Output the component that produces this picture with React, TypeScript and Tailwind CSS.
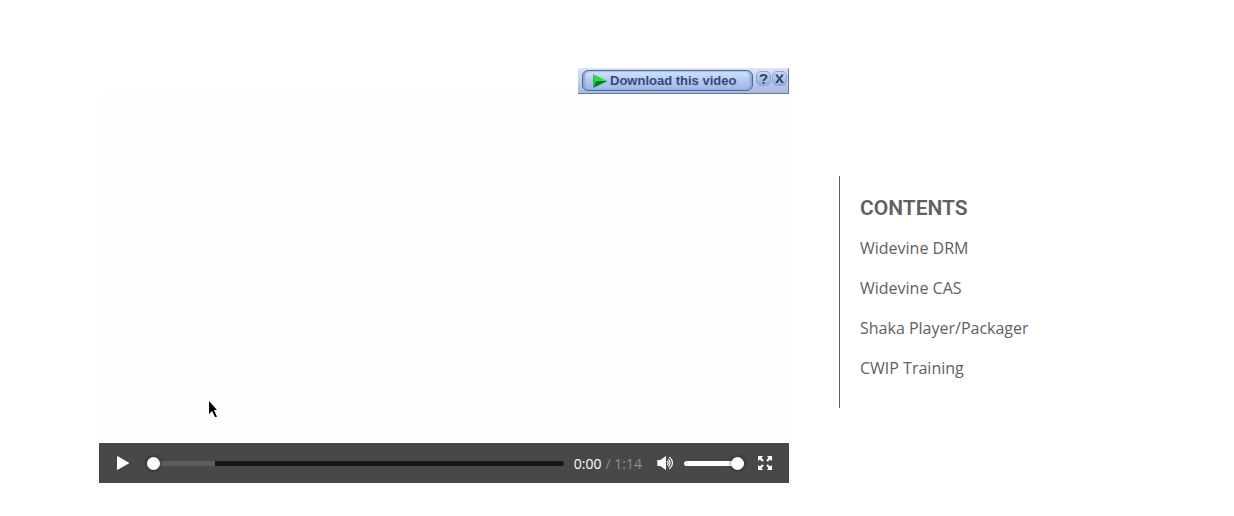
const links = ["Widevine DRM", "Widevine CAS", "Shaka Player/Packager", "CWIP Training"];

const thumb =
  "[&::-webkit-slider-thumb]:-mt-1 [&::-webkit-slider-thumb]:h-[13px] [&::-webkit-slider-thumb]:w-[13px] [&::-webkit-slider-thumb]:appearance-none [&::-webkit-slider-thumb]:rounded-full [&::-webkit-slider-thumb]:bg-white [&::-webkit-slider-thumb]:shadow-[0_0_3px_1px_rgba(0,0,0,0.4)]";

const roundButton =
  "flex h-[15px] w-[15px] items-center justify-center rounded-[5px] border border-[#8da4cf] bg-gradient-to-b from-[#c9daf5] to-[#8faede] text-[#33456b]";

function DownloadBar() {
  return (
    <div className="flex h-[26px] w-[211px] self-end border-r border-b border-[#6175a8] border-t border-t-[#dce6f8] bg-gradient-to-b from-[#d7e3f8] to-[#a9b8dc] pt-px pl-1">
      <button
        type="button"
        className="flex h-[21px] w-[171px] items-center rounded-md border border-[#50699f] bg-[linear-gradient(to_bottom,#d5e3fa,#b3caf0_50%,#9ab8e9)] pl-2 font-['Liberation_Sans',sans-serif] text-[13px] leading-4 font-bold whitespace-nowrap text-[#34497a] shadow-[inset_2px_0_2px_#8fa5d2,inset_-2px_0_2px_#8fa5d2]"
      >
        <svg width="18" height="16" viewBox="0 0 18 16" aria-hidden="true" className="shrink-0">
          <path d="M2 1 16.500 8H5Z" fill="#2fe03a" />
          <path d="M2 15 16.500 8H5Z" fill="#0b7a28" />
          <path d="M2 1 5 8 2 15Z" fill="#22c53c" />
        </svg>
        <span className="ml-px">Download this video</span>
      </button>
      <div className="ml-[3px] flex gap-px pt-px">
        <button type="button" aria-label="Help" className={roundButton}>
          <svg width="11" height="12" viewBox="0 0 11 12" fill="none" stroke="currentColor" strokeWidth="2">
            <path d="M2.500 4C2.500 1.200 8.500 1.200 8.500 4c0 1.800-3 1.800-3 4M5.500 9v2" />
          </svg>
        </button>
        <button type="button" aria-label="Close" className={roundButton}>
          <svg width="11" height="11" viewBox="0 0 11 11" fill="none" stroke="currentColor" strokeWidth="2">
            <path d="m2.500 2 6 7.500m0-7.500-6 7.500" />
            <path d="M1.500 2h2.500M7 2h2.500M1.500 9.500h2.500M7 9.500h2.500" strokeWidth="1" />
          </svg>
        </button>
      </div>
    </div>
  );
}

function Controls() {
  return (
    <div className="flex h-10 items-center bg-[#484848] pr-[17px] pl-[17px] text-white">
      <button type="button" aria-label="Play" className="flex">
        <svg width="14" height="14" viewBox="0 0 14 14" fill="#fff">
          <path d="M1 .7Q1 0 1.800.3L12.600 6.400q.8.6 0 1.200L1.800 13.700Q1 14 1 13.300Z" />
        </svg>
      </button>
      <input
        type="range"
        aria-label="Seek"
        min="0"
        max="74"
        defaultValue="0"
        className={`ml-[17px] h-[13px] min-w-0 flex-1 appearance-none bg-transparent [&::-webkit-slider-runnable-track]:h-[5px] [&::-webkit-slider-runnable-track]:rounded-full [&::-webkit-slider-runnable-track]:bg-[linear-gradient(to_right,#5c5c5c_68px,#171717_68px)] ${thumb}`}
      />
      <div className="ml-2.5 flex gap-1 pt-0.5 font-['Open_Sans',sans-serif] text-sm leading-5">
        <span>0:00</span>
        <span className="text-[#8e8e8e]">/ 1:14</span>
      </div>
      <button type="button" aria-label="Mute" className="ml-[15px] flex">
        <svg width="17" height="14" viewBox="0 0 17 14" fill="none" stroke="#fff" strokeWidth="1.2">
          <path d="M.3 4h3L9 0v14l-5.700-4h-3Z" fill="#fff" stroke="none" />
          <path d="M10.300 5q1.700 2 0 4M11.300 2.900q3.500 4.100 0 8.200M12.400.9q6.200 6.100 0 12.200" />
        </svg>
      </button>
      <input
        type="range"
        aria-label="Volume"
        defaultValue="100"
        className={`ml-2.5 h-[13px] w-[60px] appearance-none bg-transparent [&::-webkit-slider-runnable-track]:h-[5px] [&::-webkit-slider-runnable-track]:rounded-full [&::-webkit-slider-runnable-track]:bg-white ${thumb}`}
      />
      <button type="button" aria-label="Fullscreen" className="ml-3.5 flex">
        <svg width="14" height="14" viewBox="0 0 14 14" fill="#fff">
          <path d="M0 0h5L3.500 1.700 5.700 4.300 4.300 5.700 1.700 3.500 0 5Z" />
          <path d="M14 0H9l1.500 1.700L8.300 4.300 9.700 5.700l2.600-2.200L14 5Z" />
          <path d="M0 14h5l-1.500-1.700L5.700 9.700 4.300 8.300l-2.600 2.200L0 9Z" />
          <path d="M14 14H9l1.500-1.700L8.300 9.700 9.700 8.300l2.600 2.200L14 9Z" />
        </svg>
      </button>
    </div>
  );
}

export default function App() {
  return (
    <div className="min-h-screen bg-white px-[99px] pt-[68px] pb-8">
      <div className="flex items-start gap-[50px]">
        <main className="flex min-w-0 max-w-[690px] flex-1 flex-col">
          <DownloadBar />
          <div className="relative h-[349px] bg-[#fefefe]">
            <svg width="10" height="18" viewBox="0 0 10 18" className="absolute top-[307px] left-[109px]" aria-hidden="true">
              <path d="M1 0v13l3-3 3 6h2L6 9h3Z" fill="#000" />
            </svg>
          </div>
          <Controls />
        </main>
        <aside className="mt-[108px] w-[260px] border-l border-[#616161] pt-5 pb-5 pl-5 text-[#616161]">
          <h2 className="font-[Roboto,sans-serif] text-[21px] leading-6 font-semibold">CONTENTS</h2>
          <ul className="mt-2 font-['Open_Sans',sans-serif] text-base leading-10">
            {links.map((name) => (
              <li key={name}>
                <a href="#">{name}</a>
              </li>
            ))}
          </ul>
        </aside>
      </div>
    </div>
  );
}
